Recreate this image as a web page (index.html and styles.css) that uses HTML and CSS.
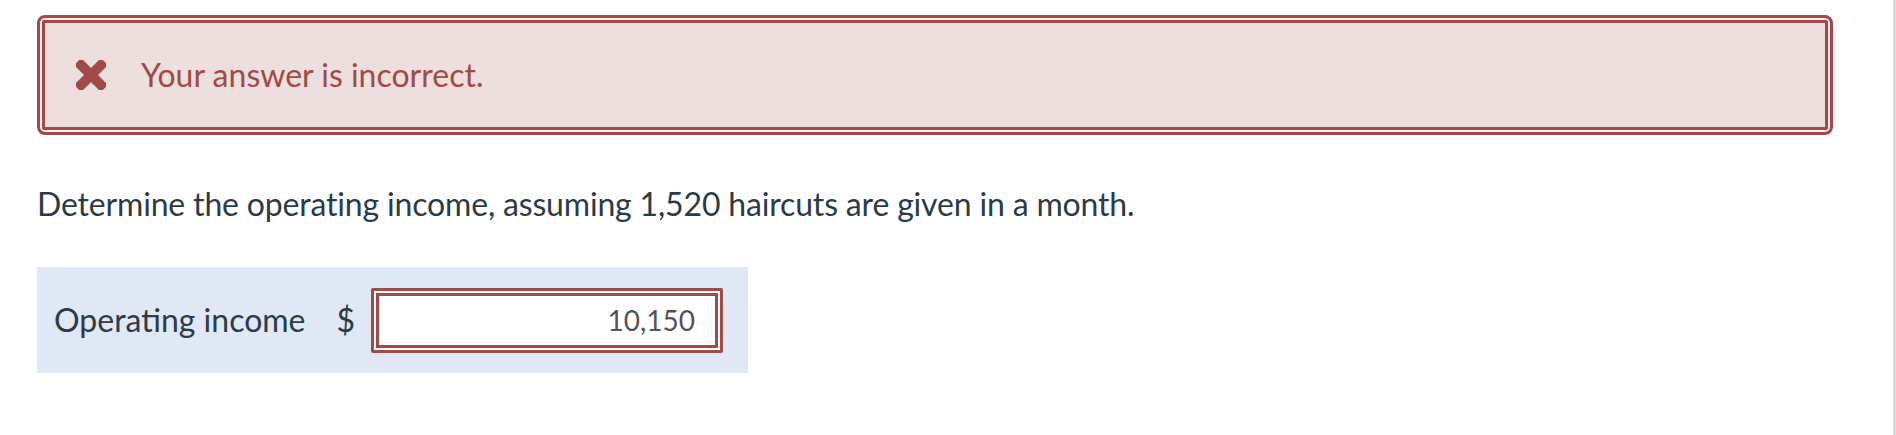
FILE: index.html
```html
<!DOCTYPE html>
<html lang="en">
<head>
<meta charset="utf-8">
<title>Quiz feedback</title>
<link rel="stylesheet" href="styles.css">
</head>
<body>
<div class="page">
  <div class="alert">
    <div class="alert-inner">
      <svg class="alert-icon" width="30" height="30" viewBox="0 0 30 30" aria-hidden="true">
        <g fill="#a24a47" transform="rotate(45 15 15)">
          <rect x="10" y="-4" width="10" height="38" rx="3.5"/>
          <rect x="-4" y="10" width="38" height="10" rx="3.5"/>
        </g>
      </svg>
      <span class="alert-text">Your answer is incorrect.</span>
    </div>
  </div>
  <p class="question">Determine the operating income, assuming 1,520 haircuts are given in a month.</p>
  <div class="answer-panel">
    <span class="answer-label">Operating income</span>
    <span class="currency">$</span>
    <div class="input-outer">
      <div class="input-inner">10,150</div>
    </div>
  </div>
</div>
</body>
</html>
```
FILE: styles.css
```css
html, body {
  margin: 0;
  padding: 0;
  background: #ffffff;
}
body {
  font-family: Lato, "Open Sans", sans-serif;
  color: #2d3b45;
}
.page {
  width: 1896px;
  min-height: 435px;
  box-sizing: border-box;
  border-right: 3px solid #dcdcdc;
  padding: 15px 60px 0 37px;
}
.alert {
  border: 3px solid #a24a47;
  border-radius: 8px;
  padding: 2px;
  background: #f8eeee;
}
.alert-inner {
  border: 3px solid #a24a47;
  border-radius: 2px;
  background: #eedfdf;
  height: 104px;
  display: flex;
  align-items: center;
  padding-left: 31px;
}
.alert-icon {
  flex: none;
  margin-right: 35px;
}
.alert-text {
  font-size: 32px;
  color: #a24a47;
  line-height: 38px;
}
.question {
  margin: 50px 0 44px 0;
  font-size: 32px;
  line-height: 38px;
  letter-spacing: -0.17px;
  color: #2d3b45;
}
.answer-panel {
  width: 711px;
  height: 106px;
  box-sizing: border-box;
  background: #dfe8f4;
  display: flex;
  align-items: center;
  padding-left: 17px;
}
.answer-label {
  font-size: 32px;
  line-height: 38px;
}
.currency {
  font-size: 32px;
  line-height: 38px;
  margin-left: 31px;
  margin-right: 16px;
}
.input-outer {
  border: 3px solid #a24a47;
  border-radius: 2px;
  padding: 2px;
  background: #ffffff;
  width: 352px;
  height: 65px;
  box-sizing: border-box;
}
.input-inner {
  border: 3px solid #a24a47;
  height: 100%;
  box-sizing: border-box;
  background: #ffffff;
  display: flex;
  align-items: center;
  justify-content: flex-end;
  padding-right: 20px;
  font-size: 28px;
  color: #555555;
}
```
